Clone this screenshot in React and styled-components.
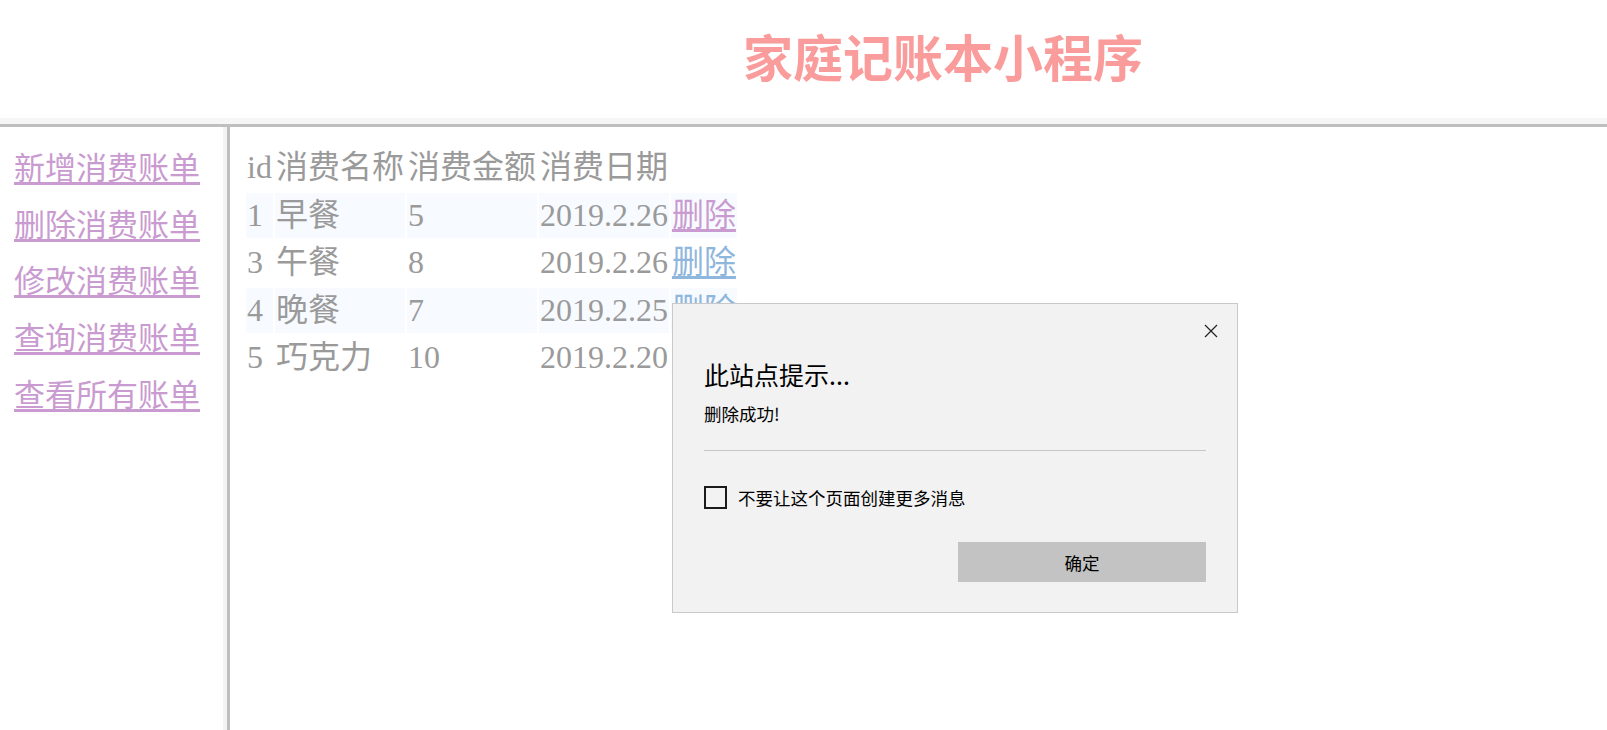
import React from 'react'
import styled, { createGlobalStyle } from 'styled-components'

const bills = [
  { id: 1, name: '早餐', amount: 5, date: '2019.2.26', visited: true },
  { id: 3, name: '午餐', amount: 8, date: '2019.2.26' },
  { id: 4, name: '晚餐', amount: 7, date: '2019.2.25' },
  { id: 5, name: '巧克力', amount: 10, date: '2019.2.20' },
]

const menu = ['新增消费账单', '删除消费账单', '修改消费账单', '查询消费账单', '查看所有账单']

const App = () => {
  return (
    <Page>
      <GlobalStyle />
      <Header>
        <Title>家庭记账本小程序</Title>
      </Header>

      <Body>
        <Sidebar>
          {menu.map((item) => (
            <NavLink key={item} href="#">{item}</NavLink>
          ))}
        </Sidebar>

        <Splitter />

        <Main>
          <BillTable>
            <tbody>
              <tr>
                <Cell>id</Cell>
                <Cell>消费名称</Cell>
                <Cell>消费金额</Cell>
                <Cell>消费日期</Cell>
              </tr>
              {bills.map((bill, i) => (
                <tr key={bill.id}>
                  <Cell $striped={i % 2 === 0}>{bill.id}</Cell>
                  <Cell $striped={i % 2 === 0}>{bill.name}</Cell>
                  <Cell $striped={i % 2 === 0}>{bill.amount}</Cell>
                  <Cell $striped={i % 2 === 0}>{bill.date}</Cell>
                  <Cell $striped={i % 2 === 0}>
                    <DeleteLink href="#" $visited={bill.visited}>删除</DeleteLink>
                  </Cell>
                </tr>
              ))}
            </tbody>
          </BillTable>
        </Main>
      </Body>

      {/* browser alert shown after a delete */}
      <AlertBox>
        <CloseButton>
          <svg width="14" height="14" viewBox="0 0 14 14">
            <path d="M1 1 L13 13 M13 1 L1 13" stroke="#222" strokeWidth="1.2" fill="none" />
          </svg>
        </CloseButton>
        <AlertTitle>此站点提示...</AlertTitle>
        <AlertMessage>删除成功!</AlertMessage>
        <AlertDivider />
        <CheckRow>
          <CheckBox />
          <span>不要让这个页面创建更多消息</span>
        </CheckRow>
        <ButtonRow>
          <OkButton>确定</OkButton>
        </ButtonRow>
      </AlertBox>
    </Page>
  )
}

export default App

const GlobalStyle = createGlobalStyle`
  body {
    margin: 0;
    background: #fff;
  }
`

const Page = styled.div`
  position: relative;
  min-height: 100vh;
  display: flex;
  flex-direction: column;
  font-family: "Liberation Serif", "Noto Sans CJK SC", serif;
`

const Header = styled.div`
  height: 118px;
  padding-left: 743px;
  border-bottom: 6px solid #f6f6f6;
  box-sizing: content-box;
`

const Title = styled.h1`
  margin: 19px 0 0;
  font-family: "Noto Sans CJK SC", sans-serif;
  font-size: 50px;
  line-height: 72px;
  font-weight: 700;
  color: #fb9c9c;
`

const Body = styled.div`
  flex: 1;
  display: flex;
  border-top: 3px solid #bfbfbf;
`

const Sidebar = styled.div`
  width: 223px;
  padding: 19px 0 0 14px;
  box-sizing: border-box;
  display: flex;
  flex-direction: column;
  align-items: flex-start;
  gap: 11.7px;
`

const NavLink = styled.a`
  font-size: 31px;
  line-height: 45px;
  color: #c99bd0;
  text-decoration: underline;
  text-underline-offset: 3px;
`

const Splitter = styled.div`
  width: 4px;
  background: #f3f3f3;
`

const Main = styled.div`
  flex: 1;
  border-left: 3px solid #bfbfbf;
  padding: 16px 0 0 14px;
`

const BillTable = styled.table`
  border-spacing: 2px;
  font-size: 32px;
  color: #9a9a9a;
`

const Cell = styled.td`
  padding: 1px;
  line-height: 43.5px;
  white-space: nowrap;
  background: ${(p) => (p.$striped ? '#f7fbff' : 'transparent')};
`

const DeleteLink = styled.a`
  color: ${(p) => (p.$visited ? '#c99bd0' : '#8fb6dd')};
  text-decoration: underline;
  text-underline-offset: 3px;
`

const AlertBox = styled.div`
  position: absolute;
  left: 672px;
  top: 303px;
  width: 566px;
  box-sizing: border-box;
  padding: 0 31px 30px;
  background: #f2f2f2;
  border: 1px solid #c9c9c9;
  font-family: "Noto Sans CJK SC", sans-serif;
  color: #000;
`

const CloseButton = styled.div`
  position: absolute;
  top: 20px;
  right: 19px;
  width: 14px;
  height: 14px;
  display: flex;
`

const AlertTitle = styled.div`
  margin-top: 53px;
  font-size: 25px;
  line-height: 34px;
`

const AlertMessage = styled.div`
  margin-top: 11px;
  font-size: 17.5px;
  line-height: 24px;
`

const AlertDivider = styled.div`
  margin-top: 24px;
  height: 1px;
  background: #c6c6c6;
`

const CheckRow = styled.div`
  margin-top: 35px;
  display: flex;
  align-items: center;
  gap: 11px;
  font-size: 17.5px;
  line-height: 23px;
`

const CheckBox = styled.div`
  width: 23px;
  height: 23px;
  box-sizing: border-box;
  border: 2px solid #1a1a1a;
`

const ButtonRow = styled.div`
  margin-top: 33px;
  display: flex;
  justify-content: flex-end;
`

const OkButton = styled.div`
  width: 248px;
  height: 40px;
  background: #c3c3c3;
  display: flex;
  align-items: center;
  justify-content: center;
  font-size: 17.5px;
`
